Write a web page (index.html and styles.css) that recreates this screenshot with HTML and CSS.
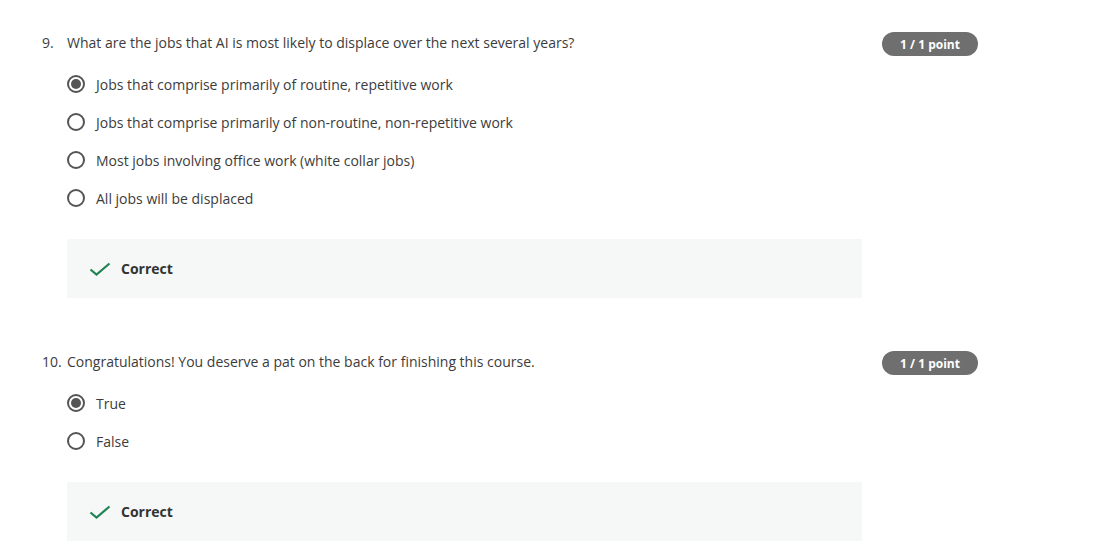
FILE: index.html
```html
<!DOCTYPE html>
<html>
<head>
<meta charset="utf-8">
<link rel="stylesheet" href="styles.css">
</head>
<body>
<div class="page">
  <section class="question">
    <div class="q-head">
      <span class="q-num">9.</span>
      <span class="q-text">What are the jobs that AI is most likely to displace over the next several years?</span>
      <span class="badge">1 / 1 point</span>
    </div>
    <ul class="options">
      <li class="option"><span class="radio checked"></span><span>Jobs that comprise primarily of routine, repetitive work</span></li>
      <li class="option"><span class="radio"></span><span>Jobs that comprise primarily of non-routine, non-repetitive work</span></li>
      <li class="option"><span class="radio"></span><span>Most jobs involving office work (white collar jobs)</span></li>
      <li class="option"><span class="radio"></span><span>All jobs will be displaced</span></li>
    </ul>
    <div class="feedback">
      <svg class="check" width="22" height="14" viewBox="0 0 22 14"><path d="M1.5 7.5 L7.5 12.5 L20.5 1.5" fill="none" stroke="#1f8354" stroke-width="2.2"/></svg>
      <span class="fb-text">Correct</span>
    </div>
  </section>
  <section class="question">
    <div class="q-head">
      <span class="q-num">10.</span>
      <span class="q-text">Congratulations! You deserve a pat on the back for finishing this course.</span>
      <span class="badge">1 / 1 point</span>
    </div>
    <ul class="options">
      <li class="option"><span class="radio checked"></span><span>True</span></li>
      <li class="option"><span class="radio"></span><span>False</span></li>
    </ul>
    <div class="feedback">
      <svg class="check" width="22" height="14" viewBox="0 0 22 14"><path d="M1.5 7.5 L7.5 12.5 L20.5 1.5" fill="none" stroke="#1f8354" stroke-width="2.2"/></svg>
      <span class="fb-text">Correct</span>
    </div>
  </section>
</div>
</body>
</html>
```

FILE: styles.css
```css
html, body {
  margin: 0;
  padding: 0;
  background: #fff;
}
body {
  font-family: "Open Sans", "Noto Sans", sans-serif;
  font-size: 14px;
  color: #3c3c3c;
}
.page {
  padding: 32px 0 0 42px;
  display: flex;
  flex-direction: column;
  gap: 53px;
}
.question {
  display: flex;
  flex-direction: column;
}
.q-head {
  display: flex;
  align-items: center;
  height: 24px;
}
.q-num {
  width: 25px;
  line-height: 20px;
  margin-top: -2px;
}
.q-text {
  width: 815px;
  line-height: 20px;
  margin-top: -2px;
}
.badge {
  width: 96px;
  height: 24px;
  border-radius: 12px;
  background: #6f6f6f;
  color: #fff;
  font-size: 12px;
  font-weight: 700;
  display: flex;
  align-items: center;
  justify-content: center;
}
.options {
  list-style: none;
  margin: 9px 0 0 25px;
  padding: 0;
}
.option {
  height: 38px;
  display: flex;
  align-items: center;
  gap: 11px;
}
.radio {
  width: 14px;
  height: 14px;
  border: 2px solid #555;
  border-radius: 50%;
  position: relative;
  flex: none;
}
.radio.checked::after {
  content: "";
  position: absolute;
  left: 2px;
  top: 2px;
  width: 10px;
  height: 10px;
  border-radius: 50%;
  background: #555;
}
.feedback {
  margin: 22px 0 0 25px;
  width: 795px;
  height: 59px;
  background: #f5f8f7;
  display: flex;
  align-items: center;
  padding-left: 22px;
  box-sizing: border-box;
  gap: 10px;
}
.check {
  flex: none;
}
.fb-text {
  font-weight: 700;
  color: #333;
}
```
